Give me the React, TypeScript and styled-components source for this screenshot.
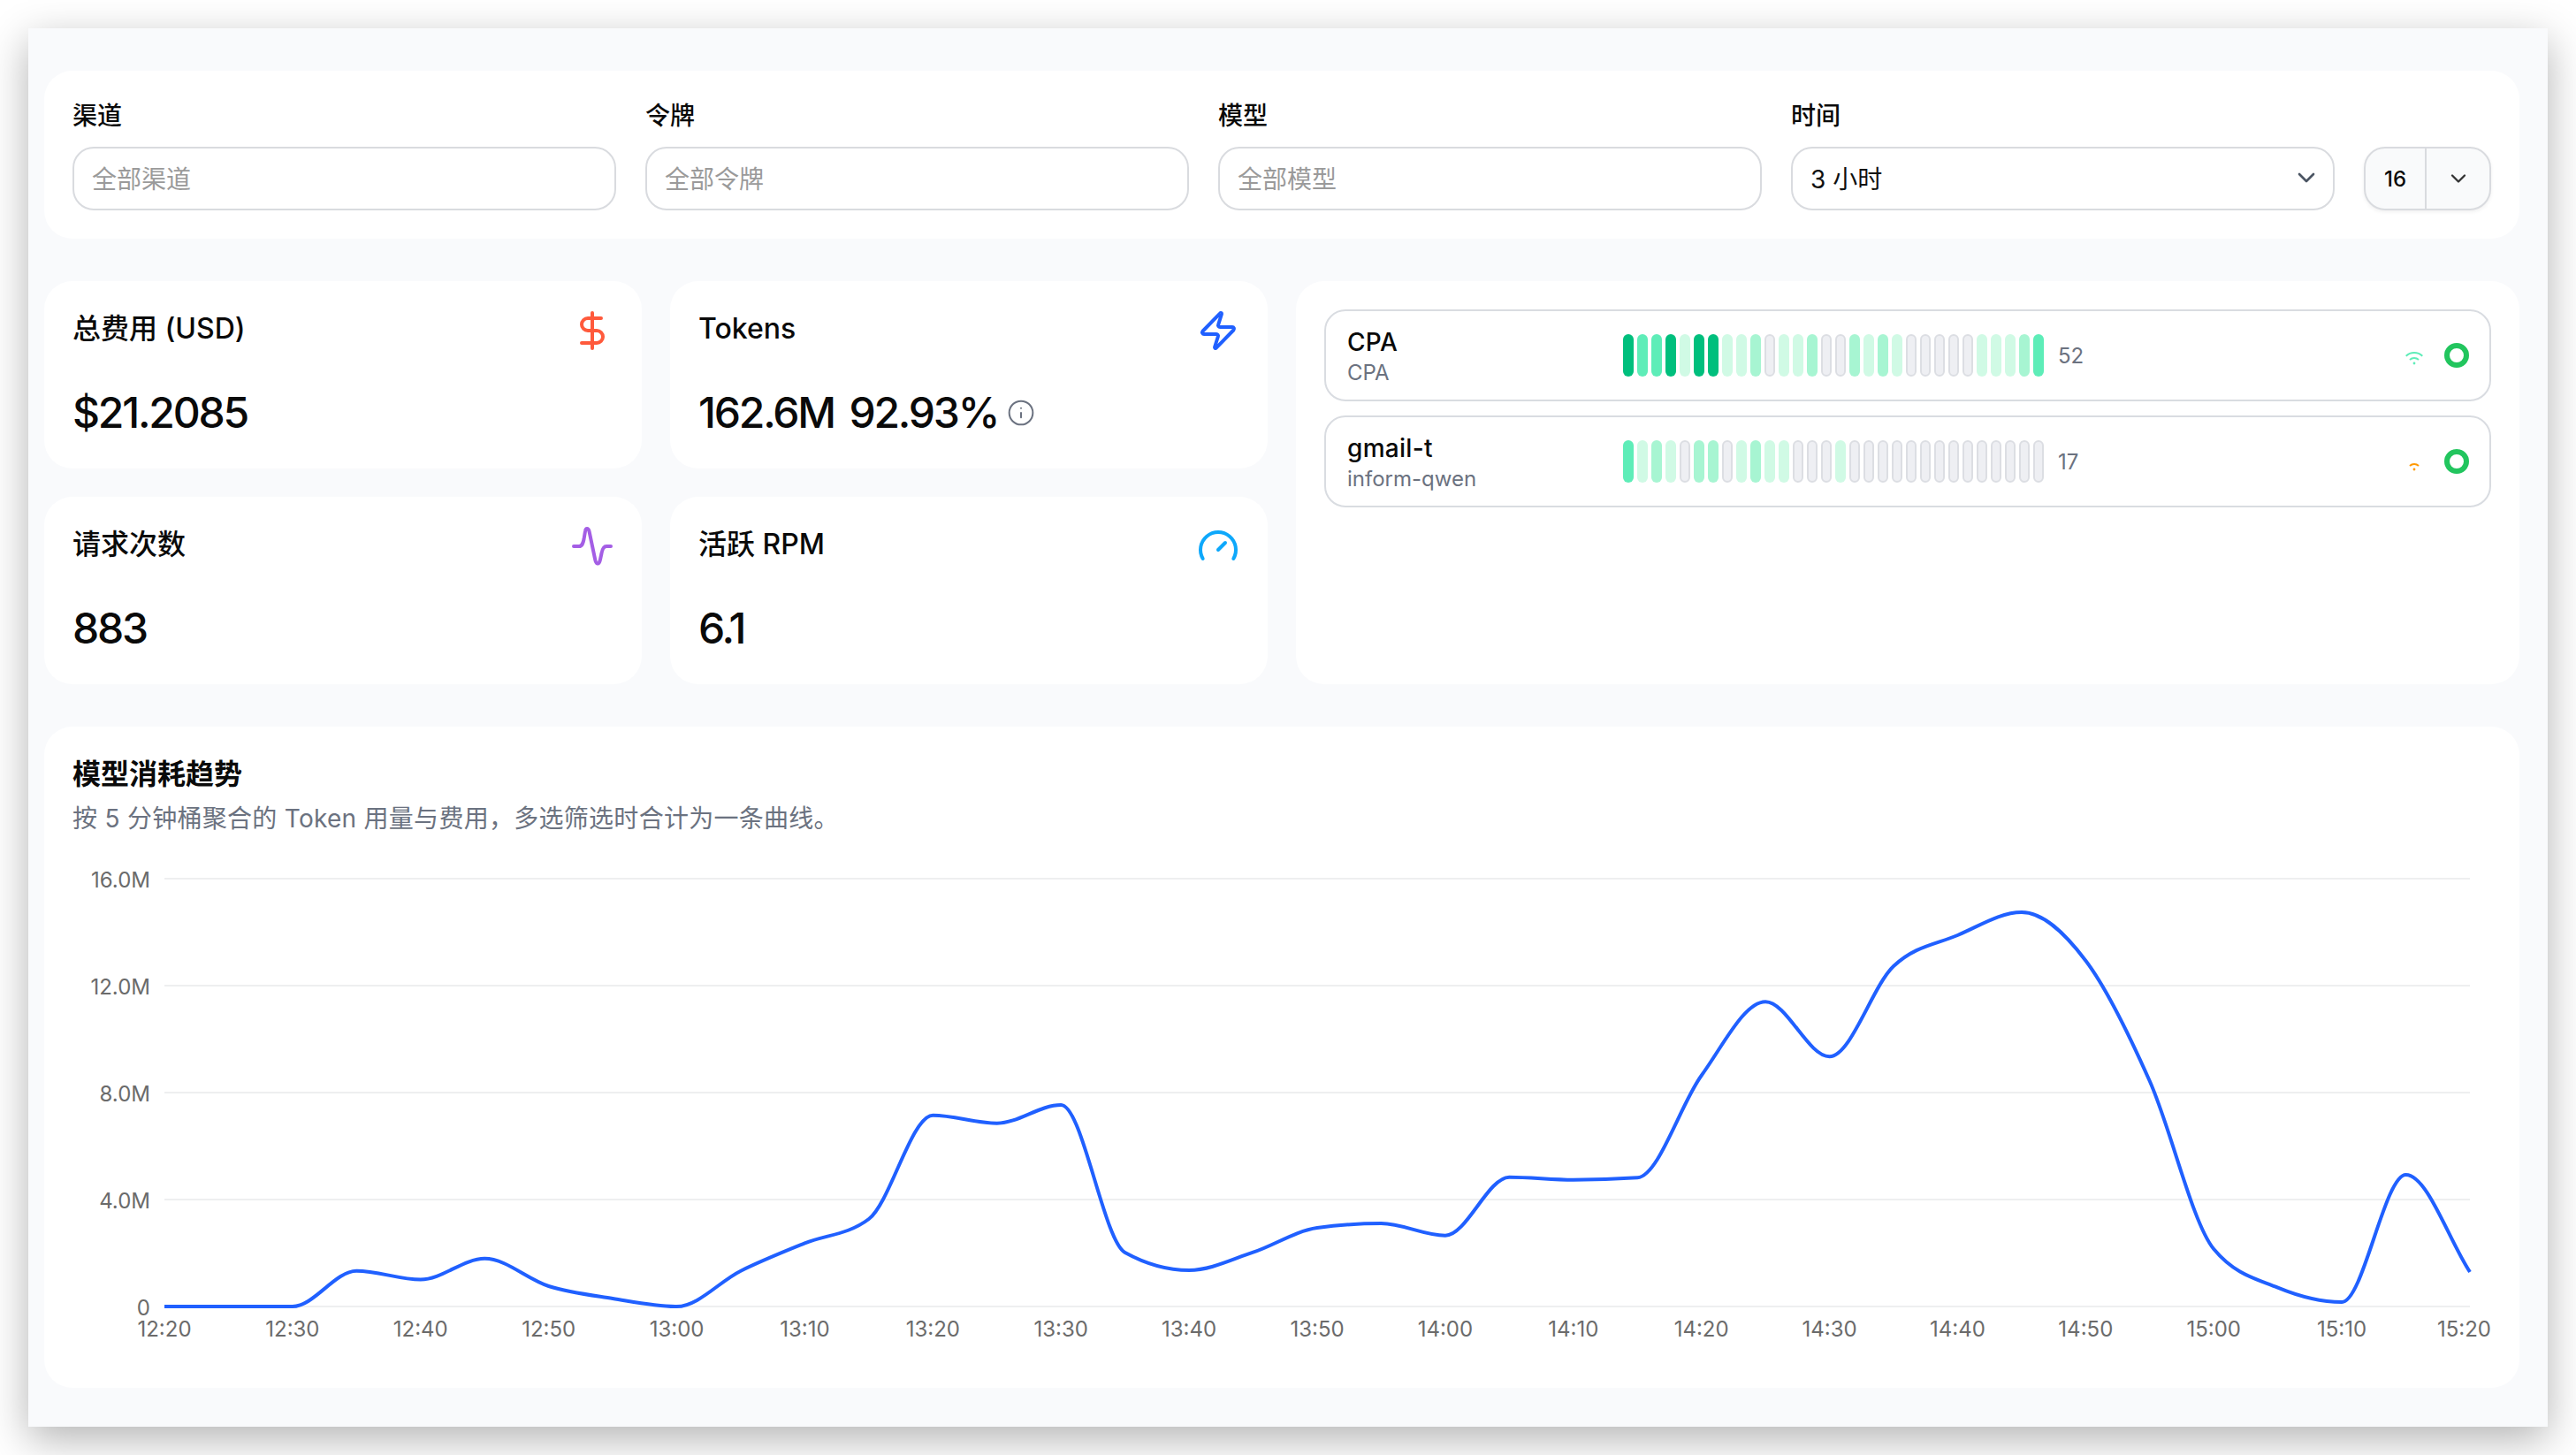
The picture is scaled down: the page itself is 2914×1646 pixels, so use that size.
import React from 'react';
import styled, { createGlobalStyle } from 'styled-components';
import { ChevronDown, DollarSign, Gauge, Info, Zap } from 'lucide-react';

const FONT = `Inter, "Noto Sans CJK SC", sans-serif`;

const GlobalStyle = createGlobalStyle`
    html, body {
        margin: 0;
        padding: 0;
        width: 2914px;
        height: 1646px;
        overflow: hidden;
        background: #ffffff;
        font-family: ${FONT};
        color: #0a0a0a;
    }
    * {
        box-sizing: border-box;
    }
`;

const Page = styled.div`
    width: 2914px;
    height: 1646px;
    padding: 32px;
`;

const Window = styled.div`
    height: 1582px;
    padding: 48px 32px 44px 18px;
    display: flex;
    flex-direction: column;
    gap: 48px;
    background: #f9fafc;
    box-shadow: 0 14px 44px rgba(0, 0, 0, 0.3);
`;

const Panel = styled.section`
    padding: 32px;
    border-radius: 32px;
    background: #ffffff;
`;

const FilterRow = styled.div`
    display: grid;
    grid-template-columns: repeat(4, 1fr) 144px;
    column-gap: 33px;
    align-items: end;
`;

const Field = styled.div`
    display: flex;
    flex-direction: column;
    gap: 16px;
`;

const FieldLabel = styled.label`
    font-size: 28px;
    line-height: 38px;
    font-weight: 500;
`;

const TextInput = styled.input`
    width: 100%;
    height: 72px;
    padding: 1px 20px 0;
    border: 2px solid #d9dbdf;
    border-radius: 24px;
    background: #ffffff;
    outline: none;
    font-family: ${FONT};
    font-size: 28px;

    &::placeholder {
        color: #9a9a9a;
        opacity: 1;
    }
`;

const SelectBox = styled.div`
    height: 72px;
    padding: 0 14px 2px 20px;
    display: flex;
    align-items: center;
    justify-content: space-between;
    border: 2px solid #d9dbdf;
    border-radius: 24px;
    font-size: 28px;
    color: #111111;

    svg {
        color: #4b5563;
    }
`;

const Stepper = styled.div`
    height: 72px;
    display: flex;
    border: 2px solid #d9dbdf;
    border-radius: 24px;
    background: #f9fafb;
    box-shadow: 0 2px 4px rgba(0, 0, 0, 0.06);
    overflow: hidden;
`;

const StepperValue = styled.div`
    width: 69px;
    display: flex;
    align-items: center;
    justify-content: center;
    border-right: 2px solid #d9dbdf;
    font-size: 24px;
    font-weight: 500;
`;

const StepperToggle = styled.div`
    flex: 1;
    display: flex;
    align-items: center;
    justify-content: center;
    color: #333333;
`;

const Columns = styled.div`
    display: grid;
    grid-template-columns: 1fr 1fr;
    gap: 32px;
`;

const StatGrid = styled.div`
    display: grid;
    grid-template-columns: 1fr 1fr;
    gap: 32px;
`;

const StatCard = styled.div`
    height: 212px;
    padding: 32px;
    border-radius: 32px;
    background: #ffffff;
`;

const StatHeader = styled.div`
    height: 48px;
    display: flex;
    justify-content: space-between;
    align-items: flex-start;
    margin-bottom: 37px;
`;

const StatTitle = styled.div`
    font-size: 32px;
    line-height: 44px;
    font-weight: 500;
`;

const StatValue = styled.div`
    display: flex;
    align-items: center;
    gap: 10px;
    font-size: 48px;
    line-height: 64px;
    font-weight: 500;
    letter-spacing: -2.2px;
    word-spacing: 6px;

    svg {
        color: #6b7280;
    }
`;

const ChannelPanel = styled(Panel)`
    display: flex;
    flex-direction: column;
    gap: 16px;
`;

const ChannelRow = styled.div`
    height: 104px;
    padding: 0 23px 0 24px;
    display: flex;
    align-items: center;
    border: 2px solid #d9dce1;
    border-radius: 24px;
`;

const ChannelInfo = styled.div`
    width: 312px;
    padding-top: 4px;
`;

const ChannelName = styled.div`
    font-size: 28px;
    line-height: 36px;
    font-weight: 500;
    letter-spacing: 0.3px;
`;

const ChannelSub = styled.div`
    font-size: 24px;
    line-height: 34px;
    color: #6b7280;
`;

const BarTrack = styled.div`
    display: flex;
    gap: 4px;
`;

const barTones: Record<string, string> = {
    d: 'background: #00bf7d;',
    m: 'background: #5eedb8;',
    l: 'background: #a7f5d2;',
    x: 'background: #d0fae5;',
    g: 'background: #eeeff3; border: 2px solid #dcdee3;',
};

const Bar = styled.span<{ $tone: string }>`
    width: 12px;
    height: 48px;
    border-radius: 6px;
    ${(props) => barTones[props.$tone]}
`;

const ChannelCount = styled.span`
    margin-left: 16px;
    font-size: 24px;
    color: #6b7280;
`;

const SignalSlot = styled.div`
    margin-left: auto;
    margin-right: 22px;
    width: 24px;
    height: 24px;
`;

const StatusRing = styled.span`
    width: 28px;
    height: 28px;
    border: 6px solid #22c55e;
    border-radius: 50%;
`;

const ChartPanel = styled(Panel)`
    flex: 1;
    display: flex;
    flex-direction: column;
`;

const ChartTitle = styled.h2`
    margin: 0;
    font-size: 32px;
    line-height: 44px;
    font-weight: 600;
`;

const ChartNote = styled.p`
    margin: 8px 0 20px;
    font-size: 28px;
    line-height: 40px;
    letter-spacing: 0.28px;
    color: #6b7280;
`;

const ChartSvg = styled.svg`
    display: block;
    text {
        font-family: ${FONT};
        font-size: 24px;
        fill: #6b6b6b;
    }
`;

// 채널별 상태 막대, 글자 하나가 막대 하나
const channels = [
    { name: 'CPA', sub: 'CPA', count: 52, bars: 'dmmdxddxxlgxxlgglxlxgggggxxxlm', signal: 'high' },
    { name: 'gmail-t', sub: 'inform-qwen', count: 17, bars: 'mxlxgllgxlxxgggxgggggggggggggg', signal: 'low' },
];

const CHART_LEFT = 82;
const CHART_TOP = 966;
const CHART_W = 2736;
const CHART_H = 572;
const PLOT_LEFT = 186;
const PLOT_RIGHT = 2794;

// 5분 단위 버킷, 화면 y 좌표
const trend = [
    1478, 1478, 1478, 1437.7, 1447.5, 1423.8, 1455, 1469, 1478, 1437.7, 1406.4, 1379,
    1261.7, 1270.7, 1250, 1417, 1437, 1416.7, 1389, 1384, 1397.7, 1331.7, 1334.7, 1332.3,
    1216.7, 1133.3, 1195.3, 1093, 1058, 1032, 1086.7, 1223, 1413, 1456.7, 1473, 1329, 1439,
];

const yTicks = [
    { label: '16.0M', y: 994 },
    { label: '12.0M', y: 1115 },
    { label: '8.0M', y: 1236 },
    { label: '4.0M', y: 1357 },
    { label: '0', y: 1478 },
];

const xTicks = ['12:20', '12:30', '12:40', '12:50', '13:00', '13:10', '13:20', '13:30', '13:40', '13:50', '14:00', '14:10', '14:20', '14:30', '14:40', '14:50', '15:00', '15:10', '15:20'];

const monotonePath = (pts: [number, number][]) => {
    const n = pts.length;
    const slopes: number[] = [];
    for (let i = 0; i < n - 1; i++) {
        slopes.push((pts[i + 1][1] - pts[i][1]) / (pts[i + 1][0] - pts[i][0]));
    }
    const tangents = pts.map((_, i) => {
        if (i === 0) return slopes[0];
        if (i === n - 1) return slopes[n - 2];
        if (slopes[i - 1] * slopes[i] <= 0) return 0;
        return Math.sign(slopes[i - 1]) * 2 * Math.min(Math.abs(slopes[i - 1]), Math.abs(slopes[i]), 0.25 * Math.abs(slopes[i - 1] + slopes[i]));
    });
    let d = `M${pts[0][0]} ${pts[0][1]}`;
    for (let i = 0; i < n - 1; i++) {
        const h = (pts[i + 1][0] - pts[i][0]) / 3;
        d += `C${pts[i][0] + h} ${pts[i][1] + h * tangents[i]} ${pts[i + 1][0] - h} ${pts[i + 1][1] - h * tangents[i + 1]} ${pts[i + 1][0]} ${pts[i + 1][1]}`;
    }
    return d;
};

const SignalIcon: React.FC<{ level: string }> = ({ level }) => {
    const color = level === 'high' ? '#5eedb8' : '#ff9900';
    return (
        <svg width="24" height="24" viewBox="0 0 24 24" fill="none" stroke={color} strokeWidth="2">
            {level === 'high' && <path d="M2.7 12.7A13.5 13.5 0 0 1 21.3 12.7" />}
            <path d="M7 17A7.25 7.25 0 0 1 17 17" />
            <circle cx="12" cy="21" r="1.4" fill={color} stroke="none" />
        </svg>
    );
};

const PulseIcon: React.FC = () => (
    <svg width="48" height="48" viewBox="0 0 48 48" fill="none" stroke="#a45ee5" strokeWidth="4" strokeLinecap="round" strokeLinejoin="round">
        <path d="M3 24H9C12.5 24 13.5 21 14.5 16L16 7C16.5 3 19.5 3 20.5 7L27 38C28 44.5 31.5 46 33 39L34.5 32C35.5 26.5 37 24 40 24H45" />
    </svg>
);

const TrendChart: React.FC = () => {
    const stepX = (PLOT_RIGHT - PLOT_LEFT) / 36;
    const points = trend.map((y, i): [number, number] => [PLOT_LEFT - CHART_LEFT + i * stepX, y - CHART_TOP]);

    return (
        <ChartSvg width={CHART_W} height={CHART_H} viewBox={`0 0 ${CHART_W} ${CHART_H}`}>
            {yTicks.map((tick) => (
                <g key={tick.label}>
                    <line x1={PLOT_LEFT - CHART_LEFT} x2={PLOT_RIGHT - CHART_LEFT} y1={tick.y - CHART_TOP} y2={tick.y - CHART_TOP} stroke="#eeeff0" strokeWidth="2" />
                    <text x={88} y={tick.y - CHART_TOP + 10} textAnchor="end">
                        {tick.label}
                    </text>
                </g>
            ))}
            {xTicks.map((label, i) => {
                const last = i === xTicks.length - 1;
                return (
                    <text key={label} x={last ? CHART_W : PLOT_LEFT - CHART_LEFT + i * stepX * 2} y={1512 - CHART_TOP} textAnchor={last ? 'end' : 'middle'}>
                        {label}
                    </text>
                );
            })}
            <path d={monotonePath(points)} fill="none" stroke="#2060ff" strokeWidth="4" strokeLinejoin="round" />
        </ChartSvg>
    );
};

const App: React.FC = () => {
    return (
        <Page>
            <GlobalStyle />
            <Window>
                <Panel>
                    <FilterRow>
                        <Field>
                            <FieldLabel>渠道</FieldLabel>
                            <TextInput placeholder="全部渠道" readOnly />
                        </Field>
                        <Field>
                            <FieldLabel>令牌</FieldLabel>
                            <TextInput placeholder="全部令牌" readOnly />
                        </Field>
                        <Field>
                            <FieldLabel>模型</FieldLabel>
                            <TextInput placeholder="全部模型" readOnly />
                        </Field>
                        <Field>
                            <FieldLabel>时间</FieldLabel>
                            <SelectBox>
                                <span>3 小时</span>
                                <ChevronDown size={32} />
                            </SelectBox>
                        </Field>
                        <Stepper>
                            <StepperValue>16</StepperValue>
                            <StepperToggle>
                                <ChevronDown size={28} />
                            </StepperToggle>
                        </Stepper>
                    </FilterRow>
                </Panel>

                <Columns>
                    <StatGrid>
                        <StatCard>
                            <StatHeader>
                                <StatTitle>总费用 (USD)</StatTitle>
                                <DollarSign size={48} color="#ff5a3c" />
                            </StatHeader>
                            <StatValue>$21.2085</StatValue>
                        </StatCard>
                        <StatCard>
                            <StatHeader>
                                <StatTitle>Tokens</StatTitle>
                                <Zap size={48} color="#2060ff" />
                            </StatHeader>
                            <StatValue>
                                162.6M 92.93%
                                <Info size={32} strokeWidth={1.5} />
                            </StatValue>
                        </StatCard>
                        <StatCard>
                            <StatHeader>
                                <StatTitle>请求次数</StatTitle>
                                <PulseIcon />
                            </StatHeader>
                            <StatValue>883</StatValue>
                        </StatCard>
                        <StatCard>
                            <StatHeader>
                                <StatTitle>活跃 RPM</StatTitle>
                                <Gauge size={48} color="#0ea8fb" />
                            </StatHeader>
                            <StatValue>6.1</StatValue>
                        </StatCard>
                    </StatGrid>

                    <ChannelPanel>
                        {channels.map((channel) => (
                            <ChannelRow key={channel.name}>
                                <ChannelInfo>
                                    <ChannelName>{channel.name}</ChannelName>
                                    <ChannelSub>{channel.sub}</ChannelSub>
                                </ChannelInfo>
                                <BarTrack>
                                    {channel.bars.split('').map((tone, i) => (
                                        <Bar key={i} $tone={tone} />
                                    ))}
                                </BarTrack>
                                <ChannelCount>{channel.count}</ChannelCount>
                                <SignalSlot>
                                    <SignalIcon level={channel.signal} />
                                </SignalSlot>
                                <StatusRing />
                            </ChannelRow>
                        ))}
                    </ChannelPanel>
                </Columns>

                <ChartPanel>
                    <ChartTitle>模型消耗趋势</ChartTitle>
                    <ChartNote>按 5 分钟桶聚合的 Token 用量与费用，多选筛选时合计为一条曲线。</ChartNote>
                    <TrendChart />
                </ChartPanel>
            </Window>
        </Page>
    );
};

export default App;
